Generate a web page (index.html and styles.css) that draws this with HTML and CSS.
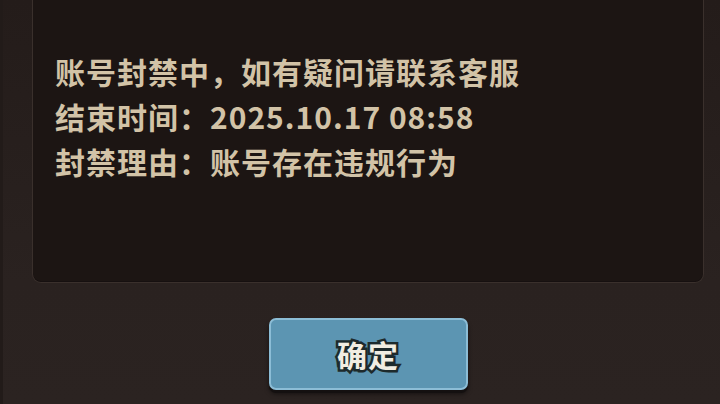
FILE: index.html
```html
<!DOCTYPE html>
<html lang="zh-CN">
<head>
<meta charset="utf-8">
<link rel="stylesheet" href="styles.css">
</head>
<body>
<div class="dialog">
  <div class="column">
    <div class="panel">
      <p class="line">账号封禁中，如有疑问请联系客服</p>
      <p class="line">结束时间：2025.10.17 08:58</p>
      <p class="line">封禁理由：账号存在违规行为</p>
    </div>
    <div class="actions">
      <button class="btn">确定</button>
    </div>
  </div>
</div>
</body>
</html>
```
FILE: styles.css
```css
html, body {
  margin: 0;
  padding: 0;
  width: 720px;
  height: 404px;
  overflow: hidden;
  background: #2a2220;
}
.dialog {
  height: 404px;
  display: flex;
  border-left: 3px solid #221b19;
  box-sizing: border-box;
  background: linear-gradient(180deg, #241c1a 0%, #2a2220 70%, #2b2321 100%);
}
.column {
  margin-left: 29px;
  width: 672px;
  display: flex;
  flex-direction: column;
}
.panel {
  height: 283px;
  box-sizing: border-box;
  background: #1c1513;
  border-radius: 0 0 9px 9px;
  border: 1px solid #3a302c;
  border-top: none;
  box-shadow: inset 0 -1px 0 #161010;
  padding: 49px 0 0 22px;
  font-family: "Noto Sans CJK SC", "Noto Sans", sans-serif;
  font-weight: 700;
  font-size: 30px;
  letter-spacing: 1px;
  color: #d2c3a7;
}
.line {
  margin: 0;
  line-height: 45px;
  white-space: nowrap;
}
.actions {
  display: flex;
  justify-content: center;
  padding-top: 35px;
}
.btn {
  width: 199px;
  height: 72px;
  box-sizing: border-box;
  background: #5c95b2;
  border: 2px solid #8cbdd6;
  border-radius: 7px;
  box-shadow: 0 3px 0 #141010, 0 4px 4px rgba(0,0,0,0.5);
  font-family: "Noto Sans CJK SC", sans-serif;
  font-weight: 700;
  font-size: 30px;
  color: #f1ede2;
  -webkit-text-stroke: 5px #1d2a2c;
  paint-order: stroke fill;
  letter-spacing: 1px;
  padding: 0;
}
```
